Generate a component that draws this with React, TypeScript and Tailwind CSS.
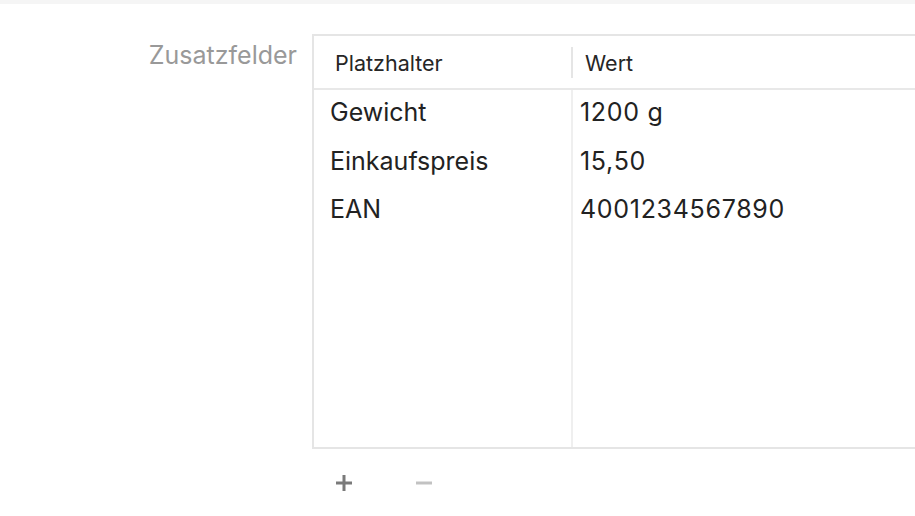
const rows = [
  { key: "Gewicht", value: "1200 g" },
  { key: "Einkaufspreis", value: "15,50" },
  { key: "EAN", value: "4001234567890" },
];

export default function App() {
  return (
    <div className="w-[915px] h-[516px] bg-white overflow-hidden font-['Inter',sans-serif]">
      <div className="h-[4px] bg-[#f5f5f5]" />
      <div className="flex pt-[30px]">
        <div className="w-[312px] shrink-0 pr-[15px] pt-[5px] text-right text-[25px] leading-[32px] text-[#999999]">
          Zusatzfelder
        </div>
        <div className="flex-1 flex flex-col">
          <div className="h-[415px] border-l-2 border-t-2 border-b-2 border-[#e5e5e5] flex flex-col">
            <div className="h-[54px] shrink-0 flex items-center border-b-2 border-[#e8e8e8] text-[21.5px] text-[#262626]">
              <div className="w-[257px] pl-[21px] pt-[3px]">Platzhalter</div>
              <div className="h-[31px] border-l-2 border-[#e5e5e5] pl-[12px] pt-[3px] flex items-center">Wert</div>
            </div>
            <div className="flex-1 flex text-[25px] text-[#222222]">
              <div className="w-[257px] pl-[16px] pt-[3px]">
                {rows.map((r) => (
                  <div key={r.key} className="h-[48.5px] leading-[38px]">
                    {r.key}
                  </div>
                ))}
              </div>
              <div className="flex-1 border-l-2 border-[#efefef] pl-[7px] pt-[3px]">
                {rows.map((r) => (
                  <div key={r.key} className="h-[48.5px] leading-[38px] tracking-[0.7px]">
                    {r.value}
                  </div>
                ))}
              </div>
            </div>
          </div>
          <div className="flex items-center h-[68px] pl-[24px] gap-[64px]">
            <svg width="16" height="16" viewBox="0 0 16 16">
              <path d="M8 0v16M0 8h16" stroke="#7a7a7a" strokeWidth="3" />
            </svg>
            <svg width="16" height="16" viewBox="0 0 16 16">
              <path d="M0 8h16" stroke="#c2c2c2" strokeWidth="3" />
            </svg>
          </div>
        </div>
      </div>
    </div>
  );
}
